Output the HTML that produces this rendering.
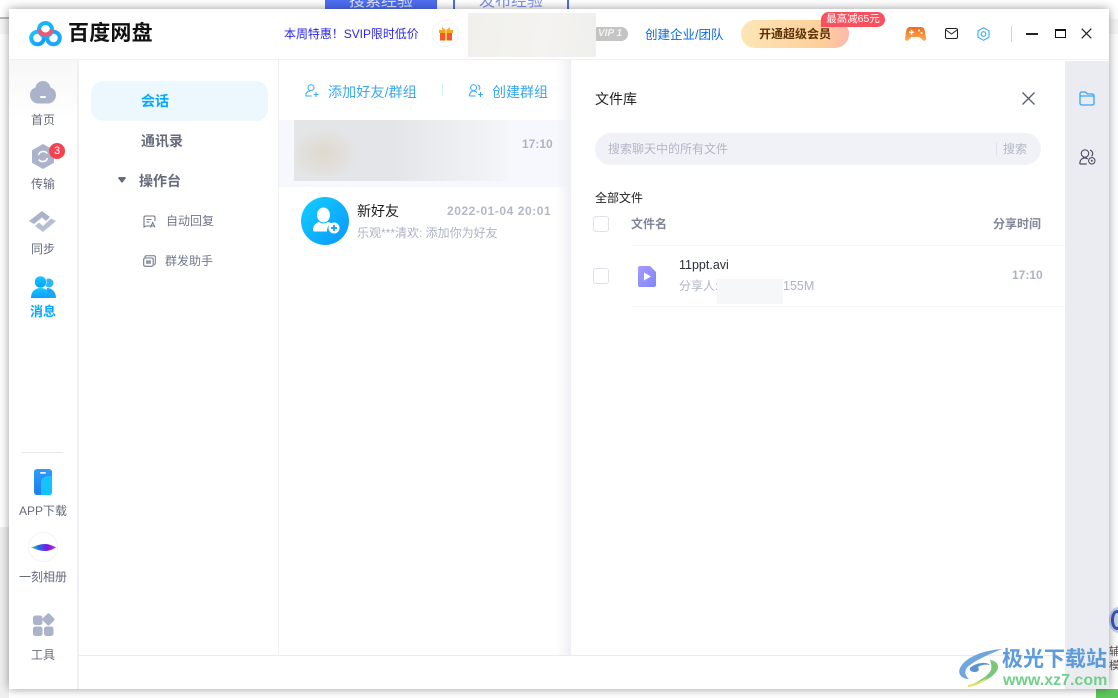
<!DOCTYPE html>
<html><head><meta charset="utf-8">
<style>
html,body{margin:0;padding:0;width:1118px;height:698px;overflow:hidden;background:#fff;font-family:"Liberation Sans","Noto Sans CJK SC",sans-serif}
.a{position:absolute;white-space:nowrap}
#win{position:absolute;left:9px;top:9px;width:1100px;height:680px;background:#fff;box-shadow:0 0 9px rgba(0,0,0,.4)}
svg{position:absolute;overflow:visible}
.nav{font-size:12px;color:#666b7d;width:68px;text-align:center;left:9px}
</style></head><body>
<div class="a" style="left:0;top:17px;width:9px;height:2px;background:#bbb"></div>
<div class="a" style="left:0;top:19px;width:1118px;height:15px;background:#f6f6f6"></div>
<div class="a" style="left:325px;top:0;width:112px;height:9px;background:#4e6ef2;color:#dfe5ff;font-size:16px;line-height:0;text-align:center;overflow:hidden"><span style="position:relative;top:2px">搜索经验</span></div>
<div class="a" style="left:453px;top:0;width:112px;height:9px;border-left:2px solid #4e6ef2;border-right:2px solid #4e6ef2;color:#7f93ea;font-size:16px;line-height:0;text-align:center;overflow:hidden"><span style="position:relative;top:2px">发布经验</span></div>
<div class="a" style="left:0;top:527px;width:9px;height:171px;background:#efefef"></div>
<div class="a" style="left:1096px;top:689px;width:22px;height:9px;background:#5fc85c"></div>
<div class="a" style="left:1109px;top:593px;width:9px;height:96px;background:#fff;overflow:hidden"><div class="a" style="left:0;top:14px;width:18px;height:26px;border-radius:50%;background:#c7d2ea"></div><div class="a" style="left:2px;top:17px;width:12px;height:20px;border-radius:50%;border:3px solid #3a56b8;box-sizing:border-box"></div><div class="a" style="left:0;top:52px;font-size:11px;line-height:14px;color:#555;width:12px;white-space:normal">辅<br>模</div></div>

<div id="win"></div>

<!-- logo -->
<svg style="left:29px;top:21px" width="34" height="27" viewBox="0 0 34 27">
<defs><linearGradient id="lg" x1="0" y1="0" x2="1" y2="1"><stop offset="0" stop-color="#19c6ff"/><stop offset="1" stop-color="#0f9cff"/></linearGradient></defs>
<circle cx="8.500" cy="17" r="6.300" fill="none" stroke="url(#lg)" stroke-width="4"/>
<circle cx="24.500" cy="17" r="6.300" fill="none" stroke="#17aaf8" stroke-width="4"/>
<circle cx="16.500" cy="8.500" r="6.500" fill="none" stroke="#19b5fb" stroke-width="4"/>
<path d="M10.400 8.800a6.300 6.300 0 0 0 12.200 0" fill="none" stroke="#f9546f" stroke-width="4"/>
</svg>
<div class="a" style="left:68px;top:20px;font-size:21px;line-height:27px;font-weight:700;color:#111;letter-spacing:.2px">百度网盘</div>

<div class="a" style="left:284px;top:26px;font-size:12px;line-height:16px;color:#2a27e8;letter-spacing:-.05px">本周特惠！SVIP限时低价</div>
<div class="a" style="left:432px;top:20px;width:27px;height:27px;border-radius:50%;border:1px solid #f3f3f3;box-sizing:border-box"></div>
<svg style="left:439px;top:27px" width="14" height="14" viewBox="0 0 14 14"><rect x="0" y="3" width="14" height="3" fill="#f5a623"/><rect x="1" y="6" width="12" height="7.500" fill="#f4572c"/><rect x="6" y="3" width="2" height="10.500" fill="#f9c74f"/><path d="M3 0l4 3 4-3v3H3z" fill="#f7b733"/></svg>
<div class="a" style="left:468px;top:13px;width:128px;height:44px;background:linear-gradient(100deg,#f1f0ec,#f4f3f0 60%,#efefec)"></div>
<div class="a" style="left:596px;top:27px;width:32px;height:14px;background:#c4c4c4;border-radius:0 7px 7px 0;color:#f2f2f2;font-size:10px;line-height:14px;font-style:italic;font-weight:700;text-indent:2px">VIP 1</div>
<div class="a" style="left:645px;top:27px;font-size:12.500px;line-height:16px;color:#0a6ae0">创建企业/团队</div>

<div class="a" style="left:741px;top:20px;width:108px;height:28px;border-radius:14px;background:linear-gradient(90deg,#fde6b6,#fdcf9a 75%,#fdb9a9);color:#5e3106;font-size:12px;font-weight:700;line-height:28px;text-align:center">开通超级会员</div>
<div class="a" style="left:821px;top:12px;width:64px;height:15px;border-radius:8px 8px 8px 0;background:#f9505f;color:#fff;font-size:10.500px;line-height:15px;text-align:center">最高减65元</div>

<svg style="left:905px;top:26px" width="21" height="16" viewBox="0 0 21 16"><defs><linearGradient id="gm" x1="0" y1="0" x2="0" y2="1"><stop offset="0" stop-color="#f36a1d"/><stop offset="1" stop-color="#fbad55"/></linearGradient></defs><path d="M5 1h11c2.500 0 3.500 2 4 5l1 6.500c.2 2.500-2.500 3-4 1L14.500 11h-8L4 13.500c-1.500 2-4.200 1.500-4-1L1 6c.5-3 1.500-5 4-5z" fill="url(#gm)"/><rect x="4" y="5.500" width="5" height="1.500" fill="#fff"/><rect x="5.800" y="3.700" width="1.500" height="5" fill="#fff"/><circle cx="14" cy="4.500" r="1" fill="#fff"/><circle cx="16.500" cy="7" r="1" fill="#fff"/></svg>
<svg style="left:945px;top:28px" width="13" height="11" viewBox="0 0 13 11"><rect x=".5" y=".5" width="12" height="10" rx="1.500" fill="none" stroke="#222" stroke-width="1"/><path d="M1 2l5.500 4L12 2" fill="none" stroke="#222" stroke-width="1"/></svg>
<svg style="left:977px;top:27px" width="13" height="14" viewBox="0 0 13 14"><path d="M6.500 .7l5.500 3.100v6.400l-5.500 3.100L1 10.200V3.800z" fill="none" stroke="#33aaf9" stroke-width="1.100"/><circle cx="6.500" cy="7" r="2.300" fill="none" stroke="#33aaf9" stroke-width="1.100"/></svg>
<div class="a" style="left:1011px;top:26px;width:1px;height:16px;background:#d5d5d5"></div>
<div class="a" style="left:1026px;top:33px;width:12px;height:1.500px;background:#222"></div>
<div class="a" style="left:1055px;top:29px;width:9px;height:6px;border:1px solid #111;border-top-width:2.500px"></div>
<svg style="left:1081px;top:28px" width="11" height="11" viewBox="0 0 11 11"><path d="M.7.700l9.600 9.600M10.300.700L.7 10.300" stroke="#222" stroke-width="1.200"/></svg>

<!-- lines -->
<div class="a" style="left:9px;top:59px;width:1100px;height:1px;background:#f1f1f1"></div>

<!-- left rail -->
<div class="a" style="left:9px;top:60px;width:68px;height:60px;background:linear-gradient(#f7f7f8,#fff)"></div>
<div class="a" style="left:77px;top:60px;width:2px;height:629px;background:#f0f0f2"></div>
<svg style="left:30px;top:81px" width="26" height="23" viewBox="0 0 26 23"><path d="M13 0c4 0 7 3 7.500 6.500 3.500 1 5.500 4 5.500 7.500 0 5-4 8.500-8 8.500H8C4 22.500 0 19 0 14c0-3.500 2-6.500 5.500-7.500C6 3 9 0 13 0z" fill="#aab3c9"/><rect x="10" y="15" width="6" height="2" rx="1" fill="#fff"/></svg>
<div class="a nav" style="top:112px;line-height:16px">首页</div>
<svg style="left:32px;top:144px" width="22" height="25" viewBox="0 0 22 25"><path d="M11 0l11 6.200v12.600L11 25 0 18.800V6.200z" fill="#aab3c9"/><path d="M6.500 11a5 5 0 0 1 8.800-1.500M15.500 14a5 5 0 0 1-8.800 1.500" stroke="#fff" stroke-width="1.500" fill="none"/></svg>
<div class="a" style="left:49px;top:143px;width:16px;height:16px;border-radius:50%;background:#f6424f;color:#fff;font-size:11px;line-height:16px;text-align:center">3</div>
<div class="a nav" style="top:176px;line-height:16px">传输</div>
<svg style="left:29px;top:211px" width="27" height="21" viewBox="0 0 27 21"><path d="M0 10L13 0l8 6-4 4-4-3.500-8 6.500z" fill="#aab3c9"/><path d="M27 10L14 21l-8-6 4-3.500 4 3.500 8-7.500z" fill="#b6bed2"/></svg>
<div class="a nav" style="top:241px;line-height:16px">同步</div>
<svg style="left:31px;top:276px" width="25" height="22" viewBox="0 0 25 22"><defs><linearGradient id="gu" x1="0" y1="0" x2="0" y2="1"><stop offset="0" stop-color="#18c8ff"/><stop offset="1" stop-color="#0a9dfc"/></linearGradient></defs><circle cx="18" cy="7" r="4.500" fill="#2fb5fb"/><path d="M16 12c5 0 9 4 9 10H14z" fill="#1ca6fb"/><path d="M9.500 0a6 6 0 1 1 0 12 6 6 0 0 1 0-12z" fill="url(#gu)" stroke="#fff" stroke-width=".5"/><path d="M0 22c0-6 3.500-10 9.500-10S19 16 19 22z" fill="url(#gu)"/></svg>
<div class="a nav" style="top:304px;line-height:16px;color:#06a7ff;font-weight:700;font-size:13px">消息</div>
<div class="a" style="left:22px;top:452px;width:41px;height:1px;background:#e8e8e8"></div>
<svg style="left:34px;top:469px" width="18" height="26" viewBox="0 0 18 26"><defs><linearGradient id="gp" x1="0" y1="0" x2="0" y2="1"><stop offset="0" stop-color="#2e9cf8"/><stop offset="1" stop-color="#1e7df0"/></linearGradient></defs><rect width="18" height="26" rx="3" fill="url(#gp)"/><path d="M7 26v-13c0-3 3-6 8-6h3v16c0 2-1 3-3 3z" fill="#13c3fd"/><rect x="6" y="3" width="6" height="1.800" rx=".9" fill="#e6f6ff"/></svg>
<div class="a nav" style="top:503px;line-height:16px">APP下载</div>
<div class="a" style="left:28px;top:532px;width:30px;height:30px;border-radius:50%;border:1px solid #f4f4f6;box-sizing:border-box"></div>
<svg style="left:31px;top:544px" width="25" height="7" viewBox="0 0 25 7"><defs><linearGradient id="gy" x1="0" y1="0" x2="1" y2="0"><stop offset="0" stop-color="#66d34a"/><stop offset=".3" stop-color="#1d6cf2"/><stop offset=".65" stop-color="#7b17e0"/><stop offset="1" stop-color="#c12cd8"/></linearGradient></defs><path d="M0 3.500C6 1.500 9 0 14 0c5 0 8 2 11 3.500C22 5 19 7 14 7 9 7 6 5.500 0 3.500z" fill="url(#gy)"/></svg>
<div class="a nav" style="top:569px;line-height:16px">一刻相册</div>
<svg style="left:33px;top:614px" width="22" height="23" viewBox="0 0 22 23"><rect y="1.500" width="9.500" height="9.500" rx="2.500" fill="#aab3c9"/><rect x="10.700" y=".7" width="9.500" height="9.500" rx="2" transform="rotate(45 15.500 5.500)" fill="#aab3c9"/><rect y="12.500" width="9.500" height="9.500" rx="2.500" fill="#aab3c9"/><rect x="11" y="12.500" width="9.500" height="9.500" rx="2.500" fill="#aab3c9"/></svg>
<div class="a nav" style="top:647px;line-height:16px">工具</div>

<!-- second column -->
<div class="a" style="left:91px;top:81px;width:177px;height:40px;border-radius:12px;background:#edf8fe"></div>
<div class="a" style="left:141px;top:92px;font-size:14px;line-height:18px;font-weight:700;color:#06a7ff">会话</div>
<div class="a" style="left:141px;top:132px;font-size:14px;line-height:18px;font-weight:700;color:#666b7d">通讯录</div>
<svg style="left:118px;top:177px" width="8" height="6" viewBox="0 0 9 7"><path d="M0 1.500Q0 0 1.500 0h6Q9 0 9 1.500L5 6.500q-.5.500-1 0z" fill="#666b7d"/></svg>
<div class="a" style="left:139px;top:172px;font-size:14px;line-height:18px;font-weight:700;color:#666b7d">操作台</div>
<svg style="left:143px;top:215px" width="13" height="13" viewBox="0 0 13 13"><path d="M8 11H3l-2 1V2.500Q1 1 2.500 1h8Q12 1 12 2.500V6" fill="none" stroke="#70778a" stroke-width="1.100"/><path d="M3.500 4.500h5M3.500 7h3" stroke="#70778a" stroke-width="1"/><path d="M7.500 12.500l2.200-5 2.300 5M8.300 11h2.800" stroke="#70778a" stroke-width="1" fill="none"/></svg>
<div class="a" style="left:166px;top:213px;font-size:12px;line-height:17px;color:#70778a">自动回复</div>
<svg style="left:143px;top:255px" width="13" height="12" viewBox="0 0 13 12"><path d="M2 3V2Q2 .7 3.500 .7h7.500Q12.300.7 12.300 2v6Q12.300 9.500 11 9.500" fill="none" stroke="#70778a" stroke-width="1"/><rect x=".7" y="3" width="9.500" height="8.300" rx="1.500" fill="none" stroke="#70778a" stroke-width="1.100"/><rect x="3" y="5.300" width="5" height="3.500" fill="#9298a8"/></svg>
<div class="a" style="left:165px;top:253px;font-size:12px;line-height:17px;color:#70778a">群发助手</div>
<div class="a" style="left:278px;top:60px;width:1px;height:596px;background:#f0f0f2"></div>

<!-- chat list -->
<svg style="left:305px;top:84px" width="14" height="13" viewBox="0 0 14 13"><circle cx="6" cy="3.700" r="3" fill="none" stroke="#3aa9f2" stroke-width="1"/><path d="M.7 12c0-3 1.700-5 4.300-5M.7 12h6" fill="none" stroke="#3aa9f2" stroke-width="1"/><path d="M8.500 10.500h5M11 8v5" stroke="#3aa9f2" stroke-width="1"/></svg>
<div class="a" style="left:328px;top:83px;font-size:14px;line-height:19px;color:#39a8f0;letter-spacing:.15px">添加好友/群组</div>
<div class="a" style="left:442px;top:84px;width:1px;height:12px;background:#d8eefb"></div>
<svg style="left:469px;top:84px" width="14" height="13" viewBox="0 0 14 13"><circle cx="4.500" cy="3.700" r="3" fill="none" stroke="#3aa9f2" stroke-width="1"/><path d="M8.500 .8a3 3 0 0 1 1.500 5M.5 12c0-3 1.700-5 4-5s3 1 3.500 2M.5 12h6" fill="none" stroke="#3aa9f2" stroke-width="1"/><path d="M9 10.500h5M11.500 8v5" stroke="#3aa9f2" stroke-width="1"/></svg>
<div class="a" style="left:492px;top:83px;font-size:14px;line-height:19px;color:#39a8f0">创建群组</div>

<div class="a" style="left:279px;top:120px;width:292px;height:67px;background:#f6f8fd"></div>
<div class="a" style="left:294px;top:120px;width:216px;height:61px;background:radial-gradient(ellipse 34px 26px at 30px 34px,#dfd8cd,rgba(223,216,205,0)),linear-gradient(90deg,#e4e5e6,#e4e5e9 45%,#f5f6fa)"></div>
<div class="a" style="left:522px;top:136px;font-size:12px;line-height:16px;font-weight:700;color:#aeb3c4">17:10</div>
<svg style="left:301px;top:197px" width="48" height="48" viewBox="0 0 48 48"><defs><linearGradient id="ga" x1="0" y1="0" x2="1" y2="1"><stop offset="0" stop-color="#12d0ff"/><stop offset="1" stop-color="#0a96fb"/></linearGradient></defs><circle cx="24" cy="24" r="24" fill="url(#ga)"/><ellipse cx="22.500" cy="18" rx="6.500" ry="7.500" fill="#fff"/><path d="M12 33c0-5 3-7 6-8 3 2 6 2 9 0 2 .5 3 1 4 2-4 1-5 4-5 7.500H13.500C12.500 34.500 12 34 12 33z" fill="#fff"/><circle cx="33" cy="31" r="5.500" fill="#fff"/><path d="M30 31h6M33 28v6" stroke="#0e9df9" stroke-width="1.700"/></svg>
<div class="a" style="left:357px;top:202px;font-size:14px;line-height:19px;color:#1b1b1f">新好友</div>
<div class="a" style="left:447px;top:203px;font-size:12px;line-height:16px;letter-spacing:.55px;font-weight:700;color:#b3b8c8">2022-01-04 20:01</div>
<div class="a" style="left:357px;top:225px;font-size:12px;line-height:17px;color:#aeb3c4">乐观***清欢: 添加你为好友</div>

<!-- panel shadow -->
<div class="a" style="left:556px;top:60px;width:15px;height:596px;background:linear-gradient(90deg,rgba(238,239,243,0),#eff0f4)"></div>

<!-- file panel -->
<div class="a" style="left:595px;top:90px;font-size:14px;line-height:19px;color:#222">文件库</div>
<svg style="left:1022px;top:92px" width="13" height="13" viewBox="0 0 13 13"><path d="M.5.500l12 12M12.500.500l-12 12" stroke="#565c6c" stroke-width="1.300"/></svg>
<div class="a" style="left:595px;top:133px;width:446px;height:32px;border-radius:16px;background:#f1f2f7"></div>
<div class="a" style="left:608px;top:141px;font-size:12px;line-height:17px;color:#b3b7c6">搜索聊天中的所有文件</div>
<div class="a" style="left:996px;top:142px;width:1px;height:14px;background:#e2e3ea"></div>
<div class="a" style="left:1003px;top:141px;font-size:12px;line-height:17px;color:#b3b7c6">搜索</div>
<div class="a" style="left:595px;top:190px;font-size:12px;line-height:17px;color:#222">全部文件</div>
<div class="a" style="left:593px;top:216px;width:16px;height:16px;border:1px solid #dfe0e8;border-radius:3px;box-sizing:border-box"></div>
<div class="a" style="left:631px;top:216px;font-size:12px;line-height:17px;font-weight:700;color:#808698">文件名</div>
<div class="a" style="left:993px;top:216px;font-size:12px;line-height:17px;font-weight:700;color:#808698">分享时间</div>
<div class="a" style="left:631px;top:245px;width:434px;height:1px;background:#f4f5f8"></div>
<div class="a" style="left:593px;top:268px;width:16px;height:16px;border:1px solid #dfe0e8;border-radius:3px;box-sizing:border-box"></div>
<svg style="left:637px;top:265px" width="20" height="23" viewBox="0 0 20 23"><defs><linearGradient id="gf" x1="0" y1="0" x2="1" y2="1"><stop offset="0" stop-color="#a79aff"/><stop offset="1" stop-color="#7f86fb"/></linearGradient></defs><path d="M3 1h10l6 6v13q0 2-2 2H3q-2 0-2-2V3q0-2 2-2z" fill="url(#gf)"/><path d="M7 7.500l7 4-7 4z" fill="#fff"/></svg>
<div class="a" style="left:679px;top:257px;font-size:12.500px;line-height:17px;color:#2d2f3a">11ppt.avi</div>
<div class="a" style="left:679px;top:278px;font-size:12px;line-height:17px;color:#aeb3c4">分享人:</div>
<div class="a" style="left:717px;top:279px;width:66px;height:25px;background:#f6f7f9"></div>
<div class="a" style="left:783px;top:278px;font-size:12.500px;line-height:17px;color:#aeb3c4">155M</div>
<div class="a" style="left:1012px;top:267px;font-size:12px;line-height:17px;font-weight:700;color:#aeb3c4">17:10</div>
<div class="a" style="left:631px;top:306px;width:434px;height:1px;background:#f4f5f8"></div>

<!-- right rail -->
<div class="a" style="left:1065px;top:61px;width:44px;height:628px;background:#ebecf1"></div>
<svg style="left:1079px;top:91px" width="16" height="15" viewBox="0 0 16 15"><path d="M1 3q0-2 2-2h3.500l2 2H13q2 0 2 2v7q0 2-2 2H3q-2 0-2-2z" fill="none" stroke="#34a6f8" stroke-width="1.300"/><path d="M1 5h14" stroke="#34a6f8" stroke-width="1.200"/></svg>
<svg style="left:1079px;top:149px" width="17" height="16" viewBox="0 0 17 16"><circle cx="6" cy="4.500" r="3.700" fill="none" stroke="#4c5364" stroke-width="1.200"/><path d="M11 1.200a3.500 3.500 0 0 1 1.500 6M.8 15c0-4 2-6 5-6 1 0 2 .2 3 1M.8 15h7" fill="none" stroke="#4c5364" stroke-width="1.200"/><circle cx="12.800" cy="11.800" r="3.200" fill="none" stroke="#4c5364" stroke-width="1.100"/><circle cx="12.800" cy="11.800" r="1" fill="#4c5364"/></svg>

<div class="a" style="left:79px;top:655px;width:1030px;height:1px;background:#ececef"></div>

<!-- watermark -->
<svg style="left:958px;top:648px" width="48" height="40" viewBox="0 0 48 40"><path d="M44 1C28 2 8 8 2 20c-3 7 3 11 9 11C6 27 6 21 12 17 20 11 32 6 44 1z" fill="#6fa6dc"/><path d="M12 20c5-5 16-7 20-3-4-1-9 0-12 2 2 3 0 5-3 5-3 0-6-1-5-4z" fill="#5d93cf"/><path d="M32 12c8 1 10 7 6 12-5 7-15 11-25 13 8-4 17-9 20-15 1-3 0-7-1-10z" fill="#7ac77a"/><path d="M10 37c6-1 14-4 20-8-4 5-12 9-20 10z" fill="#e6df5c"/></svg>
<div class="a" style="left:1002px;top:646px;font-size:21px;line-height:28px;font-weight:700;color:#5e9bdc">极光下载站</div>
<div class="a" style="left:1003px;top:671px;font-size:16px;line-height:20px;font-weight:700;color:#72cf8a">www.xz7.com</div>
</body></html>
